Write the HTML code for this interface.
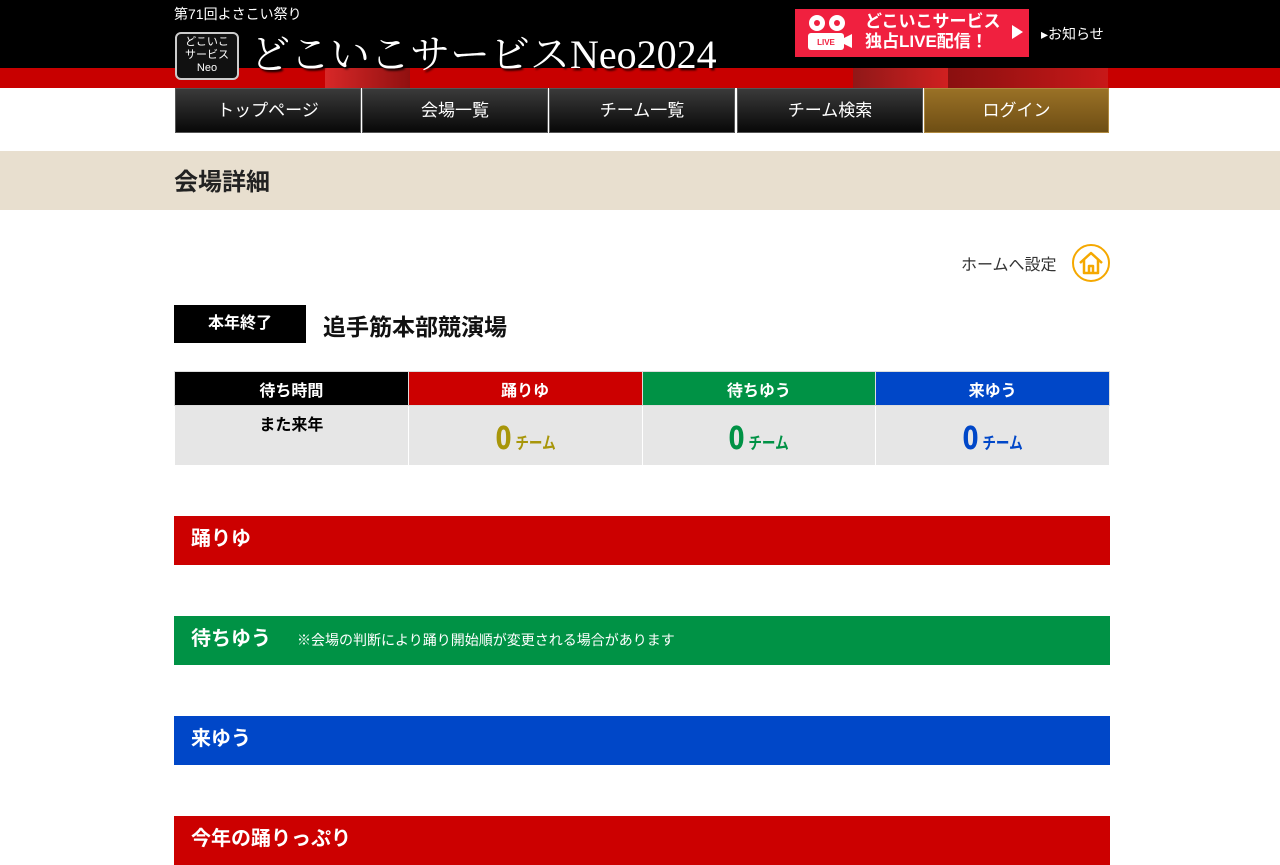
<!DOCTYPE html>
<html><head><meta charset="utf-8"><style>
*{margin:0;padding:0;box-sizing:border-box}
body{width:1280px;height:851px;overflow:hidden;background:#fff;font-family:"Liberation Sans","Noto Sans CJK JP",sans-serif;position:relative}
.hdr{position:absolute;left:0;top:0;width:1280px;height:88px;background:#000}
.stripe{position:absolute;left:0;top:68px;width:1280px;height:20px;background:#c80000}
.s2{position:absolute;left:325px;top:68px;width:85px;height:20px;background:linear-gradient(90deg,#d82828,#901010)}
.s3{position:absolute;left:853px;top:68px;width:95px;height:20px;background:linear-gradient(90deg,#901818,#d02020)}
.s4{position:absolute;left:948px;top:68px;width:160px;height:20px;background:linear-gradient(90deg,#8a1010,#c81818)}
.sub{position:absolute;left:174px;top:4px;color:#fff;font-size:14px}
.logo{position:absolute;left:175px;top:32px;width:64px;height:48px;border:2px solid #ccc;border-radius:6px;background:#111;color:#fff;font-size:11px;line-height:13px;text-align:center;padding-top:2px}
.title{position:absolute;left:250px;top:31px;color:#fff;font-family:"Liberation Serif","Noto Serif CJK SC",serif;font-size:40px;line-height:48px;text-shadow:2px 2px 2px #000}
.live{position:absolute;left:795px;top:9px;width:234px;height:48px;background:#f0203f;color:#fff;font-weight:bold;font-size:17px;line-height:20px;padding:3px 0 0 70px}
.live .ic{position:absolute;left:10px;top:5px;width:48px;height:38px}
.live .ar{position:absolute;right:6px;top:16px;width:0;height:0;border-left:11px solid #fff;border-top:7px solid transparent;border-bottom:7px solid transparent}
.news{position:absolute;left:1041px;top:24px;color:#fff;font-size:14px}
.nav{position:absolute;top:88px;height:45px;background:linear-gradient(#3a3a3a,#080808);border:1px solid #555;color:#fff;font-size:17px;text-align:center;line-height:43px}
.band{position:absolute;left:0;top:151px;width:1280px;height:59px;background:#e8dfcf}
.band h1{position:absolute;left:174px;top:11px;font-size:24px;color:#222}
.home{position:absolute;left:961px;top:251px;font-size:16px;color:#333}
.hc{position:absolute;left:1072px;top:244px;width:38px;height:38px;border:2px solid #f5a800;border-radius:50%}
.tag{position:absolute;left:174px;top:305px;width:132px;height:38px;background:#000;color:#fff;font-weight:bold;font-size:16px;text-align:center;line-height:38px}
.vn{position:absolute;left:323px;top:308px;font-size:23px;font-weight:bold;color:#111}
table{position:absolute;left:174px;top:371px;width:936px;border-collapse:collapse;table-layout:fixed}
th{height:34px;color:#fff;font-size:16px;border:1px solid #ddd}
td{height:60px;background:#e6e6e6;border:1px solid #fff;text-align:center;vertical-align:top;padding:0;line-height:20px}
.n{display:inline-block;font-size:32px;line-height:32px;margin-top:16px;font-weight:bold;font-family:"DejaVu Sans Condensed","Liberation Sans",sans-serif;transform:scaleX(.8)}
.n small{font-size:17px;font-weight:bold;font-family:"Liberation Sans","Noto Sans CJK JP",sans-serif}
.bar{position:absolute;left:174px;width:936px;height:49px;color:#fff;font-weight:bold;font-size:20px;line-height:47px;padding-left:17px}
</style></head><body>
<div class="hdr"></div><div class="stripe"></div><div class="s2"></div><div class="s3"></div><div class="s4"></div>
<div class="sub">第71回よさこい祭り</div>
<div class="logo">どこいこ<br>サービス<br>Neo</div>
<div class="title">どこいこサービスNeo2024</div>
<div class="live"><svg class="ic" viewBox="0 0 48 38"><circle cx="12" cy="9" r="8" fill="#fff"/><circle cx="12" cy="9" r="3" fill="#f0203f"/><circle cx="32" cy="9" r="8" fill="#fff"/><circle cx="32" cy="9" r="3" fill="#f0203f"/><rect x="3" y="19" width="36" height="17" rx="3" fill="#fff"/><path d="M39 24l8-4v14l-8-4z" fill="#fff"/><text x="21" y="31" font-size="8" font-weight="bold" fill="#f0203f" text-anchor="middle" font-family="Liberation Sans">LIVE</text></svg>どこいこサービス<br>独占LIVE配信！<span class="ar"></span></div>
<div class="news">▸お知らせ</div>
<div class="nav" style="left:175px;width:186px">トップページ</div>
<div class="nav" style="left:362px;width:186px">会場一覧</div>
<div class="nav" style="left:549px;width:186px">チーム一覧</div>
<div class="nav" style="left:737px;width:186px">チーム検索</div>
<div class="nav" style="left:924px;width:185px;background:linear-gradient(#9a7126,#6e4e14);border-color:#b08a40">ログイン</div>
<div class="band"><h1>会場詳細</h1></div>
<div class="home">ホームへ設定</div>
<div class="hc"><svg viewBox="0 0 34 34" width="34" height="34"><path d="M6 17L17 7l11 10M10 14v13h14V14M15 27v-7h4v7" fill="none" stroke="#f5a800" stroke-width="2.5" stroke-linejoin="round"/></svg></div>
<div class="tag">本年終了</div>
<div class="vn">追手筋本部競演場</div>
<table><tr><th style="background:#000">待ち時間</th><th style="background:#c00">踊りゆ</th><th style="background:#009245">待ちゆう</th><th style="background:#0047c8">来ゆう</th></tr>
<tr><td style="font-weight:bold;font-size:16px;padding-top:10px">また来年</td><td><span class="n" style="color:#a8960a">0<small> チーム</small></span></td><td><span class="n" style="color:#009245">0<small> チーム</small></span></td><td><span class="n" style="color:#0047c8">0<small> チーム</small></span></td></tr></table>
<div class="bar" style="top:516px;background:#c00">踊りゆ</div>
<div class="bar" style="top:616px;background:#009245">待ちゆう<span style="font-size:14px;font-weight:normal;margin-left:26px">※会場の判断により踊り開始順が変更される場合があります</span></div>
<div class="bar" style="top:716px;background:#0047c8">来ゆう</div>
<div class="bar" style="top:816px;background:#c00">今年の踊りっぷり</div>
</body></html>
